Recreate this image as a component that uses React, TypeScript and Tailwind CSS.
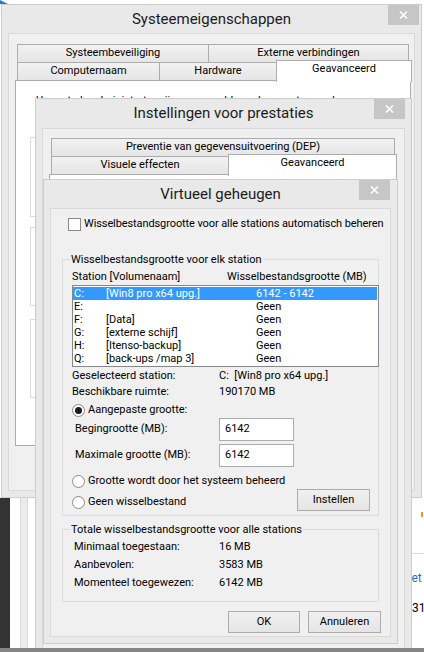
import type { ReactNode } from "react";

interface WindowProps {
  title: string;
  className: string;
  titleClass: string;
  closeClass: string;
  children?: ReactNode;
}

interface DriveItem {
  letter: string;
  label: string;
  size: string;
}

const drives: DriveItem[] = [
  { letter: "C:", label: "[Win8 pro x64 upg.]", size: "6142 - 6142" },
  { letter: "E:", label: "", size: "Geen" },
  { letter: "F:", label: "[Data]", size: "Geen" },
  { letter: "G:", label: "[externe schijf]", size: "Geen" },
  { letter: "H:", label: "[Itenso-backup]", size: "Geen" },
  { letter: "Q:", label: "[back-ups /map 3]", size: "Geen" },
];

function CloseButton({ className }: { className: string }) {
  return (
    <div
      className={`absolute flex h-[20px] w-[31px] items-center justify-center bg-[#c6c6c6] ${className}`}
    >
      <svg width="9" height="8" viewBox="0 0 9 8">
        <path d="M1 0.5 L8 7.5 M8 0.5 L1 7.5" stroke="#fff" strokeWidth="1.6" />
      </svg>
    </div>
  );
}

function Window({ title, className, titleClass, closeClass, children }: WindowProps) {
  return (
    <div
      className={`absolute flex flex-col overflow-hidden border border-[#cdcdcd] bg-[#e9e9e9] px-[6px] pb-[6px] ${className}`}
    >
      <div
        className={`flex shrink-0 items-center justify-center text-[15px] text-[#1b1b1b] ${titleClass}`}
      >
        {title}
      </div>
      <CloseButton className={closeClass} />
      <div className="min-h-0 flex-1 border border-[#d9d9d9] bg-[#f0f0f0]">{children}</div>
    </div>
  );
}

function Tab({ label, className }: { label: string; className: string }) {
  return (
    <div
      className={`flex h-[19px] shrink-0 items-center justify-center border border-[#acacac] bg-linear-to-b from-[#f2f2f2] to-[#e5e5e5] ${className}`}
    >
      {label}
    </div>
  );
}

function ActiveTab({ label, className }: { label: string; className: string }) {
  return (
    <div
      className={`relative z-10 -mb-[3px] -ml-px -mt-[2px] flex h-[22px] shrink-0 items-center justify-center border border-b-0 border-[#acacac] bg-white pb-[4px] ${className}`}
    >
      {label}
    </div>
  );
}

function Checkbox() {
  return <span className="h-[13px] w-[13px] shrink-0 border border-[#8a8a8a] bg-white" />;
}

function Radio({ on }: { on?: boolean }) {
  return (
    <span className="flex h-[13px] w-[13px] shrink-0 items-center justify-center rounded-full border border-[#8a8a8a] bg-white">
      {on && <span className="h-[7px] w-[7px] rounded-full bg-[#1c1c1c]" />}
    </span>
  );
}

function Button({ label, className }: { label: string; className: string }) {
  return (
    <div
      className={`flex h-[22px] shrink-0 items-center justify-center border border-[#acacac] bg-linear-to-b from-[#f0f0f0] to-[#e5e5e5] ${className}`}
    >
      {label}
    </div>
  );
}

function Group({ label, className, children }: { label: string; className: string; children?: ReactNode }) {
  return (
    <div className={`border border-[#dcdcdc] ${className}`}>
      <div className="-mt-[8px] ml-[7px] w-fit bg-[#f0f0f0] px-[1px] leading-[15px]">{label}</div>
      {children}
    </div>
  );
}

function BackgroundApp() {
  return (
    <div className="absolute left-0 top-[498px] flex h-[150px] w-full">
      <div className="w-[10px] bg-[#333333]" />
      <div className="w-[10px] bg-white" />
      <div className="w-[8px] border-x border-[#d6d6d6] bg-[#ececec]" />
      <div className="flex flex-1 bg-white">
        <div className="ml-auto flex w-[20px] flex-col overflow-hidden whitespace-nowrap text-[12px]">
          <div className="ml-[17px] mt-[14px] h-[5px] w-[2px] bg-[#e39a2d]" />
          <div className="mt-[36px] border-t border-[#d9d9d9]" />
          <div className="mt-[16px] leading-[16px] text-[#1a6fd6]">Pet</div>
          <div className="ml-[8px] mt-[14px] leading-[16px]">31</div>
        </div>
      </div>
    </div>
  );
}

function SystemProperties() {
  return (
    <Window
      title="Systeemeigenschappen"
      className="left-[1px] top-[4px] h-[494px] w-[421px]"
      titleClass="h-[28px]"
      closeClass="right-[2px] top-0"
    >
      <div className="ml-[6px] mt-[10px] w-[396px]">
        <div className="flex pl-[2px]">
          <Tab label="Systeembeveiliging" className="w-[192px]" />
          <Tab label="Externe verbindingen" className="-ml-px w-[201px]" />
        </div>
        <div className="-mt-px flex pl-[2px]">
          <Tab label="Computernaam" className="w-[143px]" />
          <Tab label="Hardware" className="-ml-px w-[118px]" />
          <ActiveTab label="Geavanceerd" className="w-[136px]" />
        </div>
        <div className="-mt-px h-[366px] border border-[#acacac] bg-white pl-[14px] pt-[12px]">
          <div className="ml-[6px] w-[340px] leading-[15px]">
            U moet als administrator zijn aangemeld om de meeste van deze wijzigingen aan te brengen.
          </div>
          <div className="mt-[14px] h-[80px] w-[366px] border border-[#dcdcdc]" />
          <div className="mt-[10px] h-[79px] w-[366px] border border-[#dcdcdc]" />
          <div className="mt-[13px] h-[79px] w-[366px] border border-[#dcdcdc]" />
        </div>
      </div>
    </Window>
  );
}

function PerformanceOptions() {
  return (
    <Window
      title="Instellingen voor prestaties"
      className="left-[35px] top-[98px] h-[560px] w-[377px]"
      titleClass="h-[29px]"
      closeClass="right-[6px] top-0"
    >
      <div className="ml-[6px] mt-[9px] w-[348px]">
        <div className="flex pl-[2px]">
          <Tab label="Preventie van gegevensuitvoering (DEP)" className="w-[344px]" />
        </div>
        <div className="-mt-px flex pl-[2px]">
          <Tab label="Visuele effecten" className="w-[178px]" />
          <ActiveTab label="Geavanceerd" className="w-[169px]" />
        </div>
        <div className="-mt-px h-[460px] border border-[#acacac] bg-white" />
      </div>
    </Window>
  );
}

function VirtualMemory() {
  return (
    <Window
      title="Virtueel geheugen"
      className="left-[43px] top-[179px] h-[465px] w-[355px]"
      titleClass="h-[28px]"
      closeClass="right-[7px] top-0"
    >
      <div className="flex flex-col">
        <div className="mt-[9px] flex h-[13px] items-center gap-[3px] pl-[17px]">
          <Checkbox />
          <span className="tracking-[-0.1px]">Wisselbestandsgrootte voor alle stations automatisch beheren</span>
        </div>

        {/* page file per drive */}
        <Group label="Wisselbestandsgrootte voor elk station" className="mx-[11px] mt-[28px] pb-[4px]">
          <div className="pl-[9px]">
            <div className="mt-[2px] grid h-[15px] grid-cols-[155px_1fr] items-center">
              <span>Station [Volumenaam]</span>
              <span>Wisselbestandsgrootte (MB)</span>
            </div>
            <div className="-mr-px mt-[1px] h-[82px] border border-[#828790] bg-white pr-[1px] pt-[1px]">
              {drives.map((d, i) => (
                <div
                  key={d.letter}
                  className={`grid h-[13px] grid-cols-[32px_150px_1fr] items-center pl-[1px] leading-[13px] ${
                    i === 0 ? "bg-[#3399ff] text-white" : ""
                  }`}
                >
                  <span>{d.letter}</span>
                  <span>{d.label}</span>
                  <span>{d.size}</span>
                </div>
              ))}
            </div>
            <div className="mt-[1px] grid h-[16px] grid-cols-[147px_1fr] items-center">
              <span>Geselecteerd station:</span>
              <span>C:&nbsp;&nbsp;[Win8 pro x64 upg.]</span>
            </div>
            <div className="grid h-[16px] grid-cols-[147px_1fr] items-center">
              <span>Beschikbare ruimte:</span>
              <span>190170 MB</span>
            </div>
            <div className="mt-[2px] flex h-[16px] items-center gap-[3px]">
              <Radio on />
              <span>Aangepaste grootte:</span>
            </div>
            <div className="grid h-[23px] grid-cols-[147px_75px] items-center">
              <span className="pl-[3px]">Begingrootte (MB):</span>
              <div className="h-[23px] border border-[#abadb3] bg-white pl-[5px] pt-[3px] leading-[14px]">6142</div>
            </div>
            <div className="mt-[3px] grid h-[23px] grid-cols-[147px_75px] items-center">
              <span className="pl-[3px]">Maximale grootte (MB):</span>
              <div className="h-[23px] border border-[#abadb3] bg-white pl-[5px] pt-[3px] leading-[14px]">6142</div>
            </div>
            <div className="mt-[6px] flex h-[16px] items-center gap-[3px]">
              <Radio />
              <span>Grootte wordt door het systeem beheerd</span>
            </div>
            <div className="flex h-[22px] items-center">
              <div className="mt-[4px] flex items-center gap-[3px]">
                <Radio />
                <span>Geen wisselbestand</span>
              </div>
              <Button label="Instellen" className="ml-auto mr-[8px] w-[73px]" />
            </div>
          </div>
        </Group>

        {/* totals for all drives */}
        <Group label="Totale wisselbestandsgrootte voor alle stations" className="mx-[11px] mt-[13px] pb-[9px]">
          <div className="mt-[1px] pl-[11px]">
            {[
              ["Minimaal toegestaan:", "16 MB"],
              ["Aanbevolen:", "3583 MB"],
              ["Momenteel toegewezen:", "6142 MB"],
            ].map(([k, v]) => (
              <div key={k} className="grid h-[18px] grid-cols-[145px_1fr] items-center">
                <span>{k}</span>
                <span>{v}</span>
              </div>
            ))}
          </div>
        </Group>

        <div className="mr-[9px] mt-[9px] flex justify-end gap-[8px]">
          <Button label="OK" className="w-[72px]" />
          <Button label="Annuleren" className="w-[73px]" />
        </div>
      </div>
    </Window>
  );
}

export default function App() {
  return (
    <div className="relative h-[652px] w-[424px] overflow-hidden bg-white font-['Roboto',sans-serif] text-[11px] text-black">
      <svg className="absolute left-0 top-0" width="8" height="4" viewBox="0 0 8 4">
        <polygon points="0,0 8,4 0,4" fill="#2b78d4" />
      </svg>
      <BackgroundApp />
      <SystemProperties />
      <PerformanceOptions />
      <VirtualMemory />
      <div className="absolute bottom-0 left-0 h-[4px] w-full bg-[#858585]" />
    </div>
  );
}
